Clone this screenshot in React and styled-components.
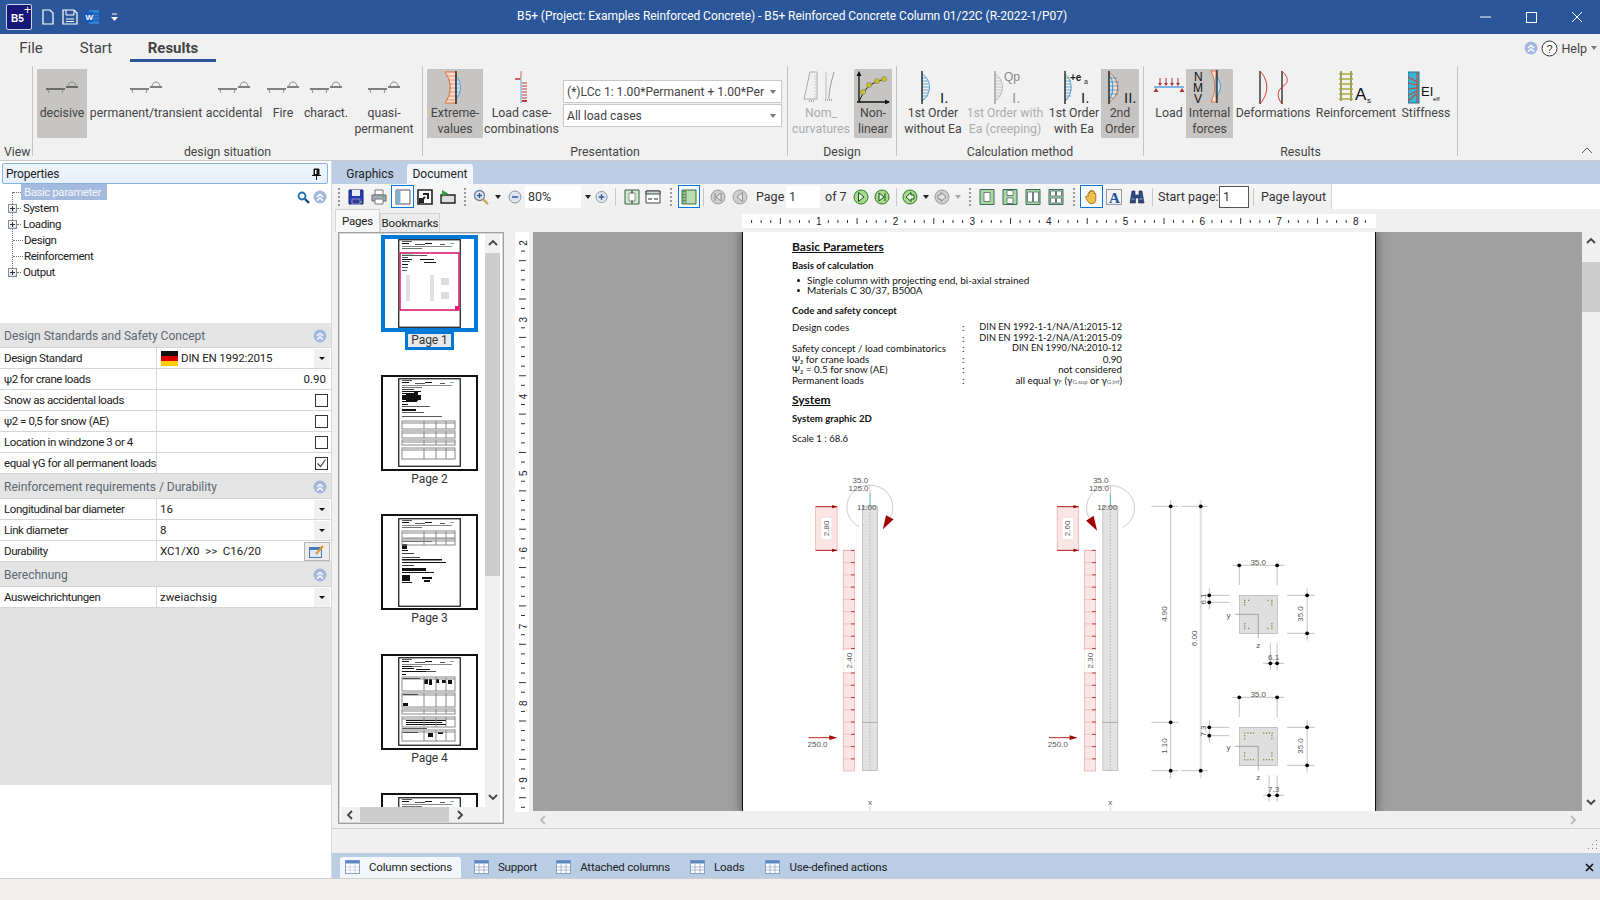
import React from "react";
import styled, { createGlobalStyle } from "styled-components";

const GlobalStyle = createGlobalStyle`
  html, body { margin: 0; padding: 0; height: 100%; overflow: hidden; }
  body { font-family: Roboto, "Liberation Sans", sans-serif; color: #333; background: #f1f1f1; }
  * { box-sizing: border-box; }
`;

const Root = styled.div`
  width: 1600px;
  height: 900px;
  display: flex;
  flex-direction: column;
  overflow: hidden;
`;

/* ---------- title bar ---------- */
const TitleBar = styled.div`
  height: 34px;
  flex: none;
  background: #2b579a;
  display: flex;
  align-items: center;
  color: #fff;
`;
const QuickAccess = styled.div`
  width: 517px;
  flex: none;
  display: flex;
  align-items: center;
  padding-left: 6px;
`;
const Logo = styled.div`
  width: 26px;
  height: 26px;
  background: #17177a;
  border: 1px solid #cfd6e6;
  border-radius: 2px;
  font: 700 10px "Liberation Sans", sans-serif;
  color: #fff;
  display: flex;
  align-items: center;
  padding: 3px 0 0 4px;
  position: relative;
  margin-right: 6px;
  span { position: absolute; top: -2px; right: 0; font-size: 12px; font-weight: 400; }
`;
const QuickBtn = styled.div`
  width: ${(p) => p.$w}px;
  display: flex;
  justify-content: center;
`;
const Title = styled.div`
  font-size: 12px;
  white-space: nowrap;
  letter-spacing: -0.04px;
  margin-top: -2px;
`;
const WindowButtons = styled.div`
  margin-left: auto;
  display: flex;
  padding-right: 0;
`;
const WindowBtn = styled.div`
  width: 46px;
  height: 34px;
  display: flex;
  align-items: center;
  justify-content: center;
`;

/* ---------- menu tabs ---------- */
const MenuRow = styled.div`
  height: 28px;
  flex: none;
  display: flex;
  align-items: flex-end;
  background: #f1f1f1;
`;
const MenuTab = styled.div`
  height: 28px;
  width: ${(p) => p.$w}px;
  display: flex;
  align-items: center;
  justify-content: center;
  font-size: 15px;
  color: #444;
  font-weight: ${(p) => (p.$active ? 700 : 400)};
  border-bottom: 3px solid ${(p) => (p.$active ? "#2b579a" : "transparent")};
  padding-top: 2px;
`;
const HelpArea = styled.div`
  margin-left: auto;
  height: 28px;
  display: flex;
  align-items: center;
  gap: 3px;
  padding-right: 3px;
  font-size: 12.5px;
  color: #444;
`;

/* ---------- ribbon ---------- */
const Ribbon = styled.div`
  height: 98px;
  flex: none;
  background: #f1f1f1;
  display: flex;
  padding: 4px 0;
  position: relative;
`;
const Group = styled.div`
  width: ${(p) => p.$w}px;
  flex: none;
  display: flex;
  flex-direction: column;
  border-right: 1px solid #c4c4c4;
`;
const GroupBody = styled.div`
  flex: 1;
  display: flex;
  gap: ${(p) => p.$gap ?? 3}px;
  padding: 3px 0 0 ${(p) => p.$pl || 0}px;
`;
const GroupLabel = styled.div`
  height: 18px;
  line-height: 18px;
  margin-bottom: -5px;
  font-size: 12.3px;
  color: #444;
  text-align: ${(p) => (p.$left ? "left" : "center")};
  padding-left: ${(p) => (p.$left ? 4 : 0)}px;
`;
const RibbonBtn = styled.div`
  width: ${(p) => p.$w}px;
  flex: none;
  height: 69px;
  margin-left: ${(p) => p.$ml || 0}px;
  background: ${(p) => (p.$active ? "#c6c5c3" : "transparent")};
  color: ${(p) => (p.$off ? "#adadad" : "#444")};
  display: flex;
  flex-direction: column;
  align-items: center;
`;
const BtnIcon = styled.div`
  height: 36px;
  flex: none;
  display: flex;
  align-items: center;
  justify-content: center;
`;
const BtnText = styled.div`
  font-size: 12.3px;
  line-height: 16px;
  text-align: center;
  white-space: nowrap;
`;
const ComboStack = styled.div`
  display: flex;
  flex-direction: column;
  gap: 1px;
  margin: 11px 0 0 3px;
`;
const Combo = styled.div`
  width: 219px;
  height: 23px;
  background: #fff;
  border: 1px solid #c8c8c8;
  font-size: 12.1px;
  color: #444;
  display: flex;
  align-items: center;
  padding-left: 3px;
  white-space: nowrap;
  span { flex: 1; }
`;
const SmallArrow = styled.i`
  flex: none;
  display: block;
  width: 0;
  height: 0;
  margin: 0 5px 0 6px;
  border-left: 3px solid transparent;
  border-right: 3px solid transparent;
  border-top: 4px solid ${(p) => p.$c || "#777"};
`;
const RibbonCollapse = styled.div`
  position: absolute;
  right: 7px;
  bottom: 2px;
`;

/* ---------- workspace ---------- */
const Workspace = styled.div`
  flex: 1;
  min-height: 0;
  display: flex;
  border-top: 1px solid #c8c8c8;
  border-bottom: 1px solid #cfcfcf;
`;
const LeftPanel = styled.div`
  width: 332px;
  flex: none;
  background: #fff;
  display: flex;
  flex-direction: column;
  border-right: 1px solid #d8d8d8;
`;
const PanelHeader = styled.div`
  height: 21px;
  margin: 2px 3px 0 2px;
  flex: none;
  background: linear-gradient(#eef5fd, #e6f0fb);
  border: 1px solid #86b2e0;
  border-radius: 2px;
  display: flex;
  align-items: center;
  justify-content: space-between;
  padding: 0 6px 0 3px;
  font-size: 12px;
  letter-spacing: -0.2px;
  color: #222;
`;
const Tree = styled.div`
  height: 139px;
  flex: none;
  position: relative;
`;
const TreeLine = styled.div`
  position: absolute;
  left: 12px;
  top: 8px;
  height: 80px;
  border-left: 1px dotted #777;
`;
const TreeTools = styled.div`
  position: absolute;
  right: 4px;
  top: 6px;
  display: flex;
  gap: 3px;
  align-items: center;
`;
const TreeRow = styled.div`
  height: 16px;
  display: flex;
  align-items: center;
  padding-left: 8px;
  font-size: 11.5px;
  letter-spacing: -0.45px;
  color: #222;
  position: relative;
`;
const Expander = styled.div`
  width: 9px;
  height: 9px;
  border: 1px solid #8a8a96;
  background: linear-gradient(#fff, #d8dce6);
  position: relative;
  flex: none;
  &::before { content: ""; position: absolute; left: 1px; right: 1px; top: 3px; height: 1px; background: #334; }
  &::after { content: ""; position: absolute; top: 1px; bottom: 1px; left: 3px; width: 1px; background: #334; }
`;
const TreeDash = styled.div`
  width: ${(p) => p.$w}px;
  margin-left: ${(p) => p.$ml || 0}px;
  margin-right: ${(p) => p.$mr ?? 2}px;
  border-top: 1px dotted #777;
  flex: none;
`;
const TreeText = styled.span`
  background: ${(p) => (p.$sel ? "#a4b9de" : "transparent")};
  color: ${(p) => (p.$sel ? "#f3f6fb" : "#222")};
  padding: 0 ${(p) => (p.$sel ? 6 : 0)}px 0 ${(p) => (p.$sel ? 3 : 0)}px;
  margin-left: ${(p) => (p.$sel ? -3 : 0)}px;
  line-height: 16px;
`;
const SectionHead = styled.div`
  height: ${(p) => p.$h || 25}px;
  flex: none;
  background: #e4e4e4;
  display: flex;
  align-items: center;
  justify-content: space-between;
  padding: 2px 4px 0 4px;
  font-size: 12px;
  color: #5f6672;
  border-bottom: 1px solid #d6d6d6;
`;
const PropRow = styled.div`
  height: 21px;
  flex: none;
  display: grid;
  grid-template-columns: 157px 1fr;
  border-bottom: 1px solid #d6d6d6;
  font-size: 11.5px;
  color: #222;
`;
const PropLabel = styled.div`
  border-right: 1px solid #d6d6d6;
  padding-left: 4px;
  display: flex;
  align-items: center;
  white-space: nowrap;
  letter-spacing: -0.42px;
`;
const PropValue = styled.div`
  display: flex;
  align-items: center;
  padding-left: ${(p) => (p.$flag ? 4 : 3)}px;
  justify-content: ${(p) => (p.$end ? "flex-end" : "flex-start")};
  padding-right: ${(p) => (p.$end ? 5 : 1)}px;
  letter-spacing: ${(p) => (p.$flag ? "-0.15px" : 0)};
  span { flex: 1; }
`;
const DropBtn = styled.div`
  width: 16px;
  height: 19px;
  background: #f0f0f0;
  display: flex;
  align-items: center;
  justify-content: center;
  flex: none;
  i { display: block; width: 0; height: 0; border-left: 3px solid transparent; border-right: 3px solid transparent; border-top: 3px solid #111; }
`;
const EditBtn = styled.div`
  width: 26px;
  height: 19px;
  background: #ececec;
  border: 1px solid #b5b5b5;
  display: flex;
  align-items: center;
  justify-content: center;
  flex: none;
`;
const CheckBox = styled.div`
  width: 13px;
  height: 13px;
  border: 1px solid #333;
  background: #fff;
  margin-right: -2px;
  display: flex;
  align-items: center;
  justify-content: center;
`;
const PanelFill = styled.div`
  height: 177px;
  flex: none;
  background: #e2e2e2;
`;

const RightPane = styled.div`
  flex: 1;
  min-width: 0;
  display: flex;
  flex-direction: column;
  background: #f0f0f0;
`;
const DocTabs = styled.div`
  height: 23px;
  flex: none;
  background: #bccee5;
  display: flex;
  align-items: flex-end;
  padding-left: 3px;
  font-size: 12px;
`;
const DocTab = styled.div`
  height: 20px;
  width: ${(p) => p.$w}px;
  margin-left: ${(p) => p.$ml || 0}px;
  display: flex;
  align-items: center;
  justify-content: center;
  color: #222;
  border-radius: 3px 3px 0 0;
  background: ${(p) => (p.$active ? "#f3f7fc" : "transparent")};
`;
const Toolbar = styled.div`
  height: 25px;
  flex: none;
  background: #fff;
  display: flex;
  align-items: center;
  font-size: 12.5px;
  color: #333;
`;
const ToolStrip = styled.div`
  height: 25px;
  width: 1000px;
  flex: none;
  background: linear-gradient(#f6f6f6, #efefef);
  display: flex;
  align-items: center;
  border-right: 1px solid #d4d4d4;
`;
const Tool = styled.div`
  width: ${(p) => p.$w}px;
  height: 23px;
  flex: none;
  display: flex;
  align-items: center;
  justify-content: center;
  border: 1px solid ${(p) => (p.$active ? "#0078d7" : "transparent")};
  background: ${(p) => (p.$active ? "#fbfbfb" : "transparent")};
`;
const ToolSep = styled.div`
  width: ${(p) => p.$w}px;
  height: 23px;
  flex: none;
  display: flex;
  align-items: center;
  justify-content: center;
  &::before { content: ""; height: 18px; width: 0; border-left: ${(p) => (p.$grip ? "2px dotted #999" : "1px solid #c8c8c8")}; }
`;
const ToolText = styled.div`
  width: ${(p) => p.$w}px;
  flex: none;
  padding-left: ${(p) => p.$pl || 0}px;
  white-space: nowrap;
`;
const ToolField = styled.div`
  width: ${(p) => p.$w}px;
  height: 22px;
  flex: none;
  background: ${(p) => (p.$bg ? "#fff" : "transparent")};
  padding-left: 3px;
  display: flex;
  align-items: center;
  border: ${(p) => (p.$boxed ? "1px solid #555" : "none")};
`;

/* ---------- viewer ---------- */
const ViewerRow = styled.div`
  flex: 1;
  min-height: 0;
  display: flex;
  border-bottom: 1px solid #d2d2d2;
`;
const ThumbColumn = styled.div`
  width: 183px;
  flex: none;
  padding-left: 3px;
  display: flex;
  flex-direction: column;
`;
const ThumbTabs = styled.div`
  height: 23px;
  flex: none;
  display: flex;
  align-items: flex-end;
  font-size: 11.5px;
`;
const ThumbTab = styled.div`
  height: ${(p) => (p.$active ? 23 : 19)}px;
  width: ${(p) => p.$w}px;
  display: flex;
  align-items: center;
  justify-content: center;
  background: ${(p) => (p.$active ? "#f8f8f8" : "#ececec")};
  border: 1px solid #d4d4d4;
  border-bottom: none;
  color: #222;
  letter-spacing: -0.15px;
`;
const ThumbFrame = styled.div`
  width: 166px;
  height: 592px;
  margin-left: 3px;
  flex: none;
  background: #fff;
  border: 1px solid #a0a0a0;
  outline: 1px solid #d8d8d8;
  outline-offset: -2px;
  display: grid;
  grid-template-columns: 1fr 15px;
  grid-template-rows: 1fr 15px;
  padding: 0 3px 1px 2px;
`;
const ThumbList = styled.div`
  overflow: hidden;
  display: flex;
  flex-direction: column;
  align-items: flex-start;
  padding: 2px 0 0 40px;
`;
const ThumbItem = styled.div`
  height: 139.5px;
  width: 97px;
  flex: none;
  display: flex;
  flex-direction: column;
  align-items: center;
`;
const ThumbBox = styled.div`
  width: 97px;
  height: ${(p) => (p.$sel ? 97 : 96)}px;
  flex: none;
  display: flex;
  align-items: center;
  justify-content: center;
  border: ${(p) => (p.$sel ? "4px solid #0078d7" : "2px solid #111")};
`;
const ThumbName = styled.div`
  font-size: 12px;
  color: #333;
  line-height: 13px;
  letter-spacing: -0.1px;
  padding: ${(p) => (p.$sel ? "0 3px" : "2px 4px")};
  margin-top: ${(p) => (p.$sel ? -1 : 0)}px;
  border: ${(p) => (p.$sel ? "3px solid #0078d7" : "none")};
  background: ${(p) => (p.$sel ? "#e8e8e8" : "transparent")};
`;
const VScroll = styled.div`
  background: #f0f0f0;
  display: flex;
  flex-direction: column;
  align-items: center;
`;
const MainVScroll = styled(VScroll)`
  width: 18px;
  flex: none;
`;
const ScrollArrow = styled.div`
  height: ${(p) => p.$h || 18}px;
  flex: none;
  display: flex;
  align-items: center;
  justify-content: center;
`;
const ScrollThumb = styled.div`
  width: 100%;
  height: ${(p) => p.$h}px;
  flex: none;
  margin-top: ${(p) => p.$mt || 0}px;
  margin-bottom: auto;
  background: #cdcdcd;
`;
const HScroll = styled.div`
  grid-column: 1 / 3;
  background: #f0f0f0;
  display: flex;
  align-items: center;
  padding-left: 4px;
`;
const HThumb = styled.div`
  width: 89px;
  height: 15px;
  margin: 0 6px 0 5px;
  background: #cdcdcd;
`;
const DocArea = styled.div`
  flex: 1;
  min-width: 0;
  display: grid;
  grid-template-rows: 23px 1fr 17px;
`;
const TopRuler = styled.div`
  padding: 5px 0 0 227px;
  svg { display: block; }
`;
const DocMiddle = styled.div`
  display: flex;
  min-height: 0;
`;
const SideRuler = styled.div`
  width: 18px;
  flex: none;
  svg { display: block; }
`;
const Canvas = styled.div`
  flex: 1;
  min-width: 0;
  background: #a0a0a0;
  overflow: hidden;
  padding-left: 209px;
`;
const Page = styled.div`
  width: 634px;
  height: 100%;
  background: #fff;
  border-left: 1px solid #111;
  border-right: 1px solid #111;
  box-shadow: 0 0 9px 2px #666;
  padding: 8px 0 0 49px;
  font-family: Lato, "Open Sans", sans-serif;
  font-size: 9.8px;
  color: #111;
  overflow: hidden;
`;
const DocH1 = styled.div`
  font-size: 12px;
  font-weight: 700;
  line-height: 14px;
  margin-top: ${(p) => p.$mt || 0}px;
  span { text-decoration: underline; }
`;
const DocH2 = styled.div`
  font-size: 9.6px;
  font-weight: ${(p) => (p.$plain ? 400 : 700)};
  line-height: 12px;
  margin-top: ${(p) => p.$mt || 0}px;
`;
const DocBullets = styled.ul`
  margin: 3px 0 0 0;
  padding: 0 0 0 15px;
  list-style: none;
  font-size: 10px;
  li { line-height: 10px; position: relative; }
  li::before { content: ""; position: absolute; left: -10px; top: 4px; width: 3px; height: 3px; border-radius: 50%; background: #111; }
`;
const DocTable = styled.div`
  margin-top: 5px;
`;
const DocRow = styled.div`
  display: grid;
  grid-template-columns: 170px 12px 148px;
  line-height: 10.5px;
  height: 10.5px;
  white-space: nowrap;
`;
const DocVal = styled.div`
  text-align: right;
  font-size: ${(p) => (p.$code ? 9.2 : 9.8)}px;
  sub { font-size: 6px; vertical-align: baseline; color: #666; }
`;
const Drawing = styled.svg`
  display: block;
  margin: 5px 0 0 -12px;
  font-family: "Liberation Sans", sans-serif;
`;
const MainHScroll = styled.div`
  margin-left: 18px;
  display: flex;
  align-items: center;
  justify-content: space-between;
  padding: 0 22px 0 5px;
`;
const BelowViewer = styled.div`
  height: 24px;
  flex: none;
  display: flex;
  justify-content: flex-end;
  align-items: flex-end;
  padding: 0 2px 3px 0;
`;
const SheetBar = styled.div`
  height: 25px;
  flex: none;
  background: #b9cde5;
  display: flex;
  align-items: flex-end;
  padding-left: 8px;
  font-size: 11.5px;
  color: #222;
`;
const SheetTab = styled.div`
  height: 21px;
  display: flex;
  align-items: center;
  gap: 9px;
  white-space: nowrap;
  flex: none;
  padding: 0 ${(p) => (p.$active ? 9 : 0)}px 1px ${(p) => (p.$active ? 5 : 0)}px;
  margin-left: ${(p) => p.$ml || 0}px;
  background: ${(p) => (p.$active ? "#f3f7fc" : "transparent")};
  border-radius: 3px 3px 0 0;
  letter-spacing: -0.2px;
`;
const SheetClose = styled.div`
  margin-left: auto;
  height: 21px;
  width: 18px;
  display: flex;
  align-items: center;
  justify-content: center;
  padding-right: 4px;
`;
const StatusBar = styled.div`
  height: 21px;
  flex: none;
  background: #f1f0ef;
`;

/* ---------- icons ---------- */
const Chevrons = ({ size = 14 }) => (
  <svg width={size} height={size} viewBox="0 0 14 14">
    <circle cx="7" cy="7" r="6.5" fill="#a6b7de" />
    <path d="M4 7l3-2.6L10 7M4 10.5l3-2.6 3 2.6" fill="none" stroke="#fff" strokeWidth="1.4" />
  </svg>
);

const Situation = () => (
  <svg width="32" height="12" viewBox="0 0 32 12">
    <path d="M0 8h19" stroke="#111" />
    <path d="M2 8.500a7.500 7 0 0 0 15 0" fill="none" stroke="#888" />
    <path d="M20 6h12" stroke="#111" />
    <path d="M22 5.500a4 4.500 0 0 1 8 0" fill="none" stroke="#888" />
  </svg>
);

const Extreme = () => (
  <svg width="22" height="33" viewBox="0 0 22 33">
    <path d="M1 1h11v31H1C8 22 8 11 1 1z" fill="#f7ddcf" stroke="#d9703c" />
    <path d="M2 5h10M4 9h8M5 13h7M5 17h7M5 21h7M4 25h8M2 29h10" stroke="#d9703c" strokeWidth=".7" />
    <path d="M12 5C18 11 18 22 12 28z" fill="#cfe4f2" stroke="#5e9cc6" />
    <path d="M12 9h3M12 13h4M12 17h4M12 21h4M12 25h2" stroke="#5e9cc6" strokeWidth=".7" />
    <path d="M12 0v33" stroke="#111" strokeWidth="1.2" />
  </svg>
);
const LoadCase = () => (
  <svg width="18" height="33" viewBox="0 0 18 33">
    <path d="M8 0v7" stroke="#c96a5a" />
    <path d="M2 8h6" stroke="#b33" strokeWidth="1.5" />
    <path d="M8 8v24" stroke="#8dbde6" strokeWidth="1.5" />
    <path d="M9 12h5M9 15h5M9 18h5M9 21h5M9 24h5M9 27h5M9 30h5" stroke="#c0392b" />
    <path d="M9 30h5" stroke="#c0392b" strokeWidth="2" />
  </svg>
);
const NomCurv = () => (
  <svg width="36" height="32" viewBox="0 0 36 32">
    <path d="M7 1h7v27H1z" fill="none" stroke="#aaa" />
    <path d="M12 4v24" stroke="#ccc" strokeDasharray="2 1" />
    <path d="M31 1c-2 8-5 16-5 27" fill="none" stroke="#999" />
    <path d="M23 1v27" stroke="#bbb" />
    <path d="M22 29h8M6 30h5" stroke="#aaa" strokeWidth="2" strokeDasharray="1 1" />
  </svg>
);
const NonLinear = () => (
  <svg width="34" height="33" viewBox="0 0 34 33">
    <path d="M3 31V2M1 31h32" stroke="#111" strokeWidth="1.3" />
    <path d="M3 0l-2.500 5h5zM34 31l-5-2.500v5z" fill="#111" />
    <path d="M3 31C8 18 14 11 30 8" fill="none" stroke="#111" />
    <g fill="#c8c21e" stroke="#777" strokeWidth=".5">
      <circle cx="7" cy="21" r="2.600" /><circle cx="13" cy="14" r="2.600" />
      <circle cx="21" cy="10" r="2.600" /><circle cx="28" cy="8" r="2.600" />
    </g>
  </svg>
);
const Bulge = ({ c = "#4d9bd0", line = "#111", w = 9, dx = 0 }) => (
  <g transform={`translate(${dx} 0)`}>
    <path d={`M3 4C${w + 4} 10 ${w + 4} 24 3 31`} fill="none" stroke={c} />
    <path d="M3 8h4M3 11h6M3 14h6M3 17h7M3 20h7M3 23h6M3 26h6M3 29h3" stroke={c} strokeWidth=".8" />
    <path d="M3 1v33" stroke={line} strokeWidth="1.3" />
  </g>
);
const RomanText = styled.text`
  font-family: "Liberation Sans", sans-serif;
  font-size: ${(p) => p.$s || 15}px;
`;
const Order1 = () => (
  <svg width="32" height="35" viewBox="0 0 32 35">
    <Bulge dx={2} />
    <RomanText x="23" y="33" fill="#222">I.</RomanText>
  </svg>
);
const OrderCreep = () => (
  <svg width="34" height="35" viewBox="0 0 34 35">
    <Bulge c="#b8b8b8" line="#999" dx={4} />
    <RomanText x="16" y="11" fill="#888" $s={12}>Qp</RomanText>
    <RomanText x="24" y="33" fill="#999">I.</RomanText>
  </svg>
);
const OrderEa = () => (
  <svg width="38" height="35" viewBox="0 0 38 35">
    <Bulge w={7} dx={7} />
    <RomanText x="15" y="11" fill="#222" $s={10} fontWeight="700">+e</RomanText>
    <RomanText x="29" y="14" fill="#222" $s={7}>a</RomanText>
    <RomanText x="26" y="33" fill="#222">I.</RomanText>
  </svg>
);
const Order2 = () => (
  <svg width="32" height="35" viewBox="0 0 32 35">
    <g transform="translate(2 0)">
      <path d="M3 2c10 8 13 22 0 30" fill="#f3e2d6" stroke="#cf6a33" />
      <path d="M3 4C8 10 8 24 3 30" fill="#cfe3f0" stroke="#3f8ec6" />
      <path d="M3 8h8M3 12h10M3 16h10M3 20h10M3 24h9M3 28h5" stroke="#3f8ec6" strokeWidth=".8" />
      <path d="M3 1v33" stroke="#111" strokeWidth="1.3" />
    </g>
    <RomanText x="20" y="33" fill="#222">II.</RomanText>
  </svg>
);
const LoadIcon = () => (
  <svg width="32" height="36" viewBox="0 0 32 36">
    <path d="M1 18h30" stroke="#7fb3e5" strokeWidth="2" />
    <path d="M7 9v6M13 9v6M19 9v6M25 9v6" stroke="#a33" />
    <path d="M5 14h4l-2 3zM11 14h4l-2 3zM17 14h4l-2 3zM23 14h4l-2 3z" fill="#a33" />
    <path d="M3 19l-2.500 4h5zM29 19l-2.500 4h5z" fill="#a33" />
  </svg>
);
const ForcesIcon = () => (
  <svg width="36" height="35" viewBox="0 0 36 35">
    <RomanText x="2" y="11" fill="#111" $s={12}>N</RomanText>
    <RomanText x="1" y="22" fill="#111" $s={12}>M</RomanText>
    <RomanText x="2" y="33" fill="#111" $s={12}>V</RomanText>
    <path d="M19 1h5v31h-5c5-10 5-21 0-31z" fill="#f8e2d6" stroke="#d9703c" />
    <path d="M24 6c6 7 6 14 0 21z" fill="#cfe4f2" stroke="#4d9bd0" />
    <path d="M25 0v33" stroke="#111" strokeWidth="1.2" />
  </svg>
);
const DeformIcon = () => (
  <svg width="30" height="33" viewBox="0 0 30 33">
    <path d="M2 0v33M24 0v33" stroke="#111" strokeWidth="1.2" />
    <path d="M2 0c9 10 9 22 0 33" fill="none" stroke="#d33" />
    <path d="M24 0c8 8 6 12 0 16-6 5-4 12 0 17" fill="none" stroke="#d33" />
  </svg>
);
const ReinfIcon = () => (
  <svg width="38" height="35" viewBox="0 0 38 35">
    <path d="M4 1v30M14 1v30" stroke="#7d7d20" strokeWidth="1.4" />
    <path d="M2 4h14M2 9h14M2 14h14M2 19h14M2 24h14M2 29h14" stroke="#a8a846" strokeWidth="1.6" />
    <RomanText x="18" y="30" fill="#111" $s={17}>A</RomanText>
    <RomanText x="30" y="33" fill="#111" $s={8}>s</RomanText>
  </svg>
);
const StiffIcon = () => (
  <svg width="36" height="33" viewBox="0 0 36 33">
    <rect x="0" y="1" width="11" height="31" fill="#38b6d8" stroke="#2a6f86" />
    <path d="M0 6l9 5M0 12l10 2M0 18l10-1M0 24l9-4M0 30l8-7M9 1v31" stroke="#c8452e" strokeWidth="1.1" />
    <RomanText x="13" y="25" fill="#111" $s={13}>EI</RomanText>
    <RomanText x="25" y="30" fill="#111" $s={6}>eff</RomanText>
  </svg>
);

/* toolbar icons */
const Ico = ({ children, s = 16, w }) => (
  <svg width={w || s} height={s} viewBox={`0 0 ${w || s} ${s}`}>{children}</svg>
);
const SaveIco = () => (
  <Ico>
    <path d="M1 1h14v14H1z" fill="#2a3bb0" stroke="#1b2470" />
    <path d="M4 1h8v6H4z" fill="#e8edf6" />
    <path d="M4 10h8v5H4z" fill="#30389a" stroke="#c6cbe8" strokeWidth=".6" />
    <circle cx="13" cy="13" r="1" fill="#4ec24e" />
  </Ico>
);
const PrintIco = () => (
  <Ico>
    <path d="M4 1h8v5H4z" fill="#fff" stroke="#777" />
    <path d="M1 6h14v6H1z" fill="#a7adb8" stroke="#666" />
    <path d="M4 10h8v5H4z" fill="#fff" stroke="#777" />
    <circle cx="12.500" cy="8" r="1" fill="#3db23d" />
  </Ico>
);
const PanelIco = () => (
  <Ico>
    <path d="M1 1h14v14H1z" fill="#fff" stroke="#555" />
    <path d="M1.500 1.500h4v13h-4z" fill="#7fb0d5" />
  </Ico>
);
const ExportIco = () => (
  <Ico>
    <path d="M1 1h14v14H1z" fill="#fff" stroke="#222" strokeWidth="1.600" />
    <path d="M2 14L8 8M6 5h5v5" fill="none" stroke="#222" strokeWidth="2" />
    <path d="M2 9h5v5H2z" fill="#222" />
  </Ico>
);
const FilmIco = () => (
  <Ico>
    <path d="M1 6h14v8H1z" fill="#ddd" stroke="#222" strokeWidth="1.400" />
    <path d="M2 1v7l6-3.500z" fill="#2d9b3a" />
  </Ico>
);
const ZoomIco = () => (
  <Ico>
    <circle cx="6.500" cy="6.500" r="5" fill="#dbe6f4" stroke="#6f7f96" strokeWidth="1.300" />
    <path d="M10 10l5 5" stroke="#c8a24a" strokeWidth="2.200" />
    <path d="M4 6.500h5M6.500 4v5" stroke="#2d5b9a" strokeWidth="1.300" />
  </Ico>
);
const RoundIco = ({ sign }) => (
  <Ico s={14}>
    <circle cx="7" cy="7" r="6" fill="#dfe5ee" stroke="#8793a6" />
    <path d={sign === "+" ? "M4 7h6M7 4v6" : "M4 7h6"} stroke="#2d5b9a" strokeWidth="1.500" />
  </Ico>
);
const FitPage = () => (
  <Ico>
    <path d="M1 1h14v14H1z" fill="#cfe8cf" stroke="#39613f" />
    <path d="M5 4h6v8H5z" fill="#fff" stroke="#555" strokeWidth=".6" />
    <path d="M8 1.500v3M8 11.500v3" stroke="#222" />
  </Ico>
);
const FitWidth = () => (
  <Ico>
    <path d="M1 2h14v12H1z" fill="#fff" stroke="#445" />
    <path d="M1 2h14v3H1z" fill="#c8d8c8" stroke="#445" />
    <path d="M3 10h4M9 10h4" stroke="#222" />
  </Ico>
);
const ViewPanel = () => (
  <Ico>
    <path d="M1 1h14v14H1z" fill="#b9dcb0" stroke="#3c6a3c" />
    <path d="M1.500 1.500h4v13h-4z" fill="#5b8a5b" />
    <path d="M2.500 4h2M2.500 7h2M2.500 10h2M2.500 13h2" stroke="#fff" />
  </Ico>
);
const NavIco = ({ kind, on }) => {
  const fill = on ? "#a9d88f" : "#cfcfcf";
  const stroke = on ? "#2f7a2f" : "#9b9b9b";
  const d = {
    first: "M11 4L6 8l5 4zM5 4v8",
    prev: "M10.500 3.500L5 8l5.500 4.500z",
    next: "M5.500 3.500L11 8l-5.500 4.500z",
    last: "M5 4l5 4-5 4zM11 4v8",
    back: "M9 3.500L4 8l5 4.500V10h3V6H9z",
    fwd: "M7 3.500L12 8l-5 4.500V10H4V6h3z",
  }[kind];
  return (
    <Ico>
      <circle cx="8" cy="8" r="7" fill={fill} stroke={stroke} />
      <path d={d} fill={on ? "#e9f6df" : "#e8e8e8"} stroke={on ? "#14501a" : "#8a8a8a"} />
    </Ico>
  );
};
const BookIco = ({ kind }) => {
  const cells = {
    single: <path d="M5 3.500h6v9H5z" fill="#fff" stroke="#456" strokeWidth=".7" />,
    cont: <path d="M5 1.500h6v5H5zM5 9h6v5.500H5z" fill="#fff" stroke="#456" strokeWidth=".7" />,
    two: <path d="M2.500 3h5v10h-5zM8.500 3h5v10h-5z" fill="#fff" stroke="#456" strokeWidth=".7" />,
    four: <path d="M2.500 2h5v5h-5zM8.500 2h5v5h-5zM2.500 9h5v5h-5zM8.500 9h5v5h-5z" fill="#fff" stroke="#456" strokeWidth=".7" />,
  }[kind];
  return (
    <Ico>
      <path d="M1 .500h14v15H1z" fill="#a9d8a0" stroke="#3c6a5a" />
      {cells}
    </Ico>
  );
};
const HandIco = () => (
  <Ico>
    <path d="M4 8V4.500c0-1.200 1.500-1.200 1.500 0V2.500c0-1.200 1.700-1.200 1.700 0v-.5c0-1 1.600-1 1.600 0v1c0-1 1.500-1 1.500 0v2c0-1 1.500-1 1.500 0v6c0 2-1.500 3.500-3.500 3.500H7c-1.500 0-2.500-1-3-2L1.500 8.500C1 7.500 2.500 6.500 3.500 7.500z" fill="#f0c04c" stroke="#8a6415" strokeWidth=".8" />
  </Ico>
);
const TextSelIco = () => (
  <Ico>
    <path d="M.500.500h15v15H.500z" fill="none" stroke="#345" strokeDasharray="1 1" />
    <RomanText x="3" y="14" fill="#1f4e9a" $s={15} fontWeight="700" style={{ fontFamily: "Liberation Serif" }}>A</RomanText>
  </Ico>
);
const BinocIco = () => (
  <Ico>
    <path d="M3 2h3v4h4V2h3l2 12H9.500V9h-3v5H1z" fill="#2e4a80" stroke="#19294d" strokeWidth=".6" />
    <path d="M2.500 10h3M10.500 10h3" stroke="#8fb0e0" />
  </Ico>
);
const TinyArrow = ({ dir, c = "#444" }) => {
  const d = { up: "M1 7l4-4 4 4", down: "M1 3l4 4 4-4", left: "M7 1L3 5l4 4", right: "M3 1l4 4-4 4" }[dir];
  return (
    <svg width="10" height="10" viewBox="0 0 10 10">
      <path d={d} fill="none" stroke={c} strokeWidth="1.800" />
    </svg>
  );
};
const GridIco = ({ active }) => (
  <svg width="15" height="14" viewBox="0 0 15 14">
    <rect x=".5" y=".5" width="14" height="13" fill="#fff" stroke="#8aa0c4" />
    <rect x=".5" y=".5" width="14" height="3" fill="#5e86c4" />
    <path d="M1 7h13M1 10h13M5 4v9M10 4v9" stroke={active ? "#c3cfe2" : "#9aa8c4"} strokeWidth=".8" />
  </svg>
);

/* rulers */
const HRuler = () => {
  const parts = [];
  for (let i = 1; i < 66; i++) {
    const x = i * 9.59;
    const major = i % 8 === 0;
    const half = i % 8 === 4;
    if (major) {
      parts.push(
        <text key={i} x={x} y="10.500" fontSize="10" textAnchor="middle" fill="#222" fontFamily="Liberation Sans">
          {i / 8}
        </text>
      );
    } else {
      parts.push(<path key={i} d={`M${x} ${half ? 4 : 6}v${half ? 6 : 3}`} stroke="#333" />);
    }
  }
  return (
    <svg width="634" height="14" viewBox="0 0 634 14" style={{ background: "#fff" }}>
      {parts}
    </svg>
  );
};
const VRuler = () => {
  const parts = [];
  for (let i = 0; i < 62; i++) {
    const y = 4.500 + i * 9.59;
    parts.push(<path key={`t${i}`} d={`M${i % 4 === 2 ? 4 : 6} ${y + 5}h${i % 4 === 2 ? 7 : 4}`} stroke="#333" />);
  }
  [2, 3, 4, 5, 6, 7, 8, 9, 10].forEach((v) => {
    const y = 11 + (v - 2) * 76.7;
    parts.push(
      <rect key={`b${v}`} x="2" y={y - 6} width="12" height="12" fill="#fff" />,
      <text key={`l${v}`} fontSize="10" textAnchor="middle" fill="#222" fontFamily="Liberation Sans" transform={`translate(11.500 ${y}) rotate(-90)`}>
        {v}
      </text>
    );
  });
  return (
    <svg width="14" height="580" viewBox="0 0 14 580" style={{ background: "#fff" }}>
      {parts}
    </svg>
  );
};

/* thumbnails: fake page content */
const commonBars = [
  [4, 2, 10, 0.7], [4, 4, 7, 1], [17, 5, 10, 0.7], [27, 4, 7, 1], [42, 5, 5, 0.7], [52, 4, 4, 0.7, "#4a80c8"], [4, 7, 50, 0.5], [4, 9, 20, 0.6],
];
const thumbBars = {
  1: [
    [4, 16, 25, 0.7], [4, 18, 6, 0.7], [4, 20, 10, 1], [22, 20, 14, 1], [4, 22, 8, 0.7], [26, 23, 12, 1], [4, 25, 6, 1], [4, 28, 6, 0.7], [4, 31, 5, 0.7],
  ],
  2: [
    [4, 11, 12, 0.8], [4, 13, 19, 1], [4, 15, 8, 1], [4, 17, 19, 5], [4, 23, 15, 1], [8, 15, 10, 9], [16, 14, 4, 9], [4, 26, 6, 1], [4, 28, 28, 0.7], [4, 31, 14, 2], [4, 34, 22, 0.7], [4, 38, 40, 0.7],
  ],
  3: [
    [4, 23, 30, 0.7], [4, 26, 5, 5], [4, 32, 6, 1], [4, 35, 12, 0.8], [4, 39, 18, 0.8], [4, 41, 40, 1.5], [4, 44, 44, 1], [4, 47, 12, 0.8], [4, 50, 24, 3], [4, 54, 32, 1], [4, 57, 8, 6], [24, 59, 10, 2], [26, 62, 6, 2], [4, 64, 10, 1],
  ],
  4: [
    [4, 9, 10, 1], [4, 11, 12, 1], [18, 12, 14, 1], [4, 14, 24, 1], [26, 14, 12, 0.7], [4, 17, 4, 1], [5, 21, 17, 1], [26, 22, 4, 5], [31, 22, 3, 6], [38, 22, 3, 4], [44, 23, 4, 3], [50, 23, 4, 4], [5, 37, 15, 1], [5, 46, 5, 3], [8, 63, 40, 1], [8, 65, 36, 1], [8, 67, 40, 1], [4, 71, 25, 0.7], [5, 75, 15, 1], [30, 76, 5, 4], [40, 75, 5, 2],
  ],
  5: [[4, 12, 30, 1], [4, 15, 16, 1]],
};
const thumbTables = {
  1: [],
  2: [[4, 43, 53, 8], [4, 53, 53, 7], [4, 62, 53, 5], [4, 70, 53, 11]],
  3: [[4, 13, 53, 7], [4, 21, 53, 6]],
  4: [[4, 20, 53, 14], [4, 36, 53, 14], [4, 52, 53, 5], [4, 60, 53, 10], [4, 73, 53, 11]],
  5: [],
};
const ThumbPage = ({ n }) => (
  <svg width="63" height="89" viewBox="0 0 63 89">
    <rect x=".75" y=".75" width="61.5" height="87.5" fill="#fff" stroke="#111" strokeWidth="1.200" />
    {[...commonBars, ...thumbBars[n]].map(([x, y, w, h, c], i) => (
      <rect key={i} x={x} y={y} width={w} height={h} fill={c || "#111"} />
    ))}
    {thumbTables[n].map(([x, y, w, h], i) => (
      <g key={i} fill="none" stroke="#888" strokeWidth="1">
        <rect x={x} y={y} width={w} height={h} />
        <path d={`M${x} ${y + 2}h${w}M${x + 22} ${y}v${h}M${x + 34} ${y}v${h}M${x + 44} ${y}v${h}`} />
      </g>
    ))}
    {n === 1 && (
      <g>
        <rect x="4" y="14.500" width="11" height="1" fill="#3ddc84" />
        <rect x="8" y="36" width="4" height="26" fill="#e0e0e0" />
        <rect x="32" y="36" width="4" height="26" fill="#e0e0e0" />
        <rect x="43" y="39" width="8" height="7" fill="#ddd" />
        <rect x="43" y="53" width="8" height="7" fill="#ddd" />
        <rect x="1.200" y="14" width="60.600" height="57" fill="none" stroke="#3ddc84" strokeWidth=".8" />
        <rect x="2" y="14" width="59" height="57" fill="none" stroke="#f0107a" strokeWidth="1.500" />
        <rect x="57" y="67" width="4" height="4" fill="#f0107a" />
      </g>
    )}
  </svg>
);

/* drawing on the page, coordinates measured off the reference */
const X = (p) => 780 + p / 2.8;
const Y = (p) => 450 + p / 3;

const Dot = ({ x, y }) => <circle cx={X(x)} cy={Y(y)} r="1.900" fill="#000" />;
const Seg = ({ x1, y1, x2, y2, c = "#999", w = 0.6, dash }) => (
  <line x1={X(x1)} y1={Y(y1)} x2={X(x2)} y2={Y(y2)} stroke={c} strokeWidth={w} strokeDasharray={dash} />
);
const Lbl = ({ x, y, rot, size = 8, children }) => (
  <text
    x={X(x)}
    y={Y(y)}
    fontSize={size}
    fill="#555"
    textAnchor="middle"
    dominantBaseline="central"
    transform={rot ? `rotate(-90 ${X(x)} ${Y(y)})` : undefined}
  >
    {children}
  </text>
);
const Poly = ({ pts, fill }) => (
  <polygon points={pts.map(([a, b]) => `${X(a)},${Y(b)}`).join(" ")} fill={fill} />
);

const ColumnModel = ({ cx, band, strip, arrow, a, b, top, arc, head }) => {
  const ticks = [];
  for (let y = 301; y < 963; y += 36.8) ticks.push(y);
  return (
    <g>
      <rect x={X(cx - 21)} y={Y(168)} width={42 / 2.8} height={794 / 3} fill="#e2e2e2" stroke="#999" strokeWidth=".5" />
      <Seg x1={cx} y1={168} x2={cx} y2={962} c="#aaa" w={0.6} dash="2 1" />
      <Seg x1={cx - 21} y1={817} x2={cx + 21} y2={817} c="#888" />
      <Seg x1={cx} y1={105} x2={cx} y2={130} c="#e39a9a" />
      <Seg x1={cx} y1={130} x2={cx} y2={168} c="#3aa7a7" w={0.9} />
      <path d={arc} fill="none" stroke="#aaa" strokeWidth=".6" />
      <Poly pts={head} fill="#a00000" />
      <Lbl x={cx - 27} y={90}>35.0</Lbl>
      <Lbl x={cx - 32} y={116}>125.0</Lbl>
      <Lbl x={cx - 9} y={171}>{top}</Lbl>
      <rect x={X(band)} y={Y(170)} width={60 / 2.8} height={131 / 3} fill="#fae5e5" stroke="#ee9a9a" strokeWidth=".6" />
      <Seg x1={band} y1={170} x2={band + 60} y2={170} c="#b01010" w={0.9} />
      <Seg x1={band} y1={301} x2={band + 60} y2={301} c="#b01010" w={0.9} />
      <Poly pts={[[band + 46, 165], [band + 60, 170], [band + 46, 175]]} fill="#a00000" />
      <Poly pts={[[band + 46, 296], [band + 60, 301], [band + 46, 306]]} fill="#a00000" />
      <rect x={X(band + 15)} y={Y(203)} width={30 / 2.8} height={65 / 3} fill="#fff" stroke="#ddd" strokeWidth=".4" />
      <Lbl x={band + 30} y={235} rot>{a}</Lbl>
      <rect x={X(strip)} y={Y(301)} width={32 / 2.8} height={662 / 3} fill="#fae5e5" stroke="#ee9a9a" strokeWidth=".6" />
      {ticks.map((y) => (
        <Seg key={y} x1={strip} y1={y} x2={strip + 32} y2={y} c="#eba0a0" w={0.5} />
      ))}
      {ticks.map((y) => (
        <Seg key={`a${y}`} x1={strip + 22} y1={y} x2={strip + 32} y2={y} c="#a01010" w={0.8} />
      ))}
      <rect x={X(strip)} y={Y(600)} width={32 / 2.8} height={66 / 3} fill="#fff" />
      <Lbl x={strip + 17} y={632} rot>{b}</Lbl>
      <Seg x1={arrow} y1={863} x2={arrow + 65} y2={863} c="#b01010" w={0.9} />
      <Poly pts={[[arrow + 58, 856], [arrow + 80, 863], [arrow + 58, 870]]} fill="#a00000" />
      <Lbl x={arrow + 25} y={882}>250.0</Lbl>
      <Lbl x={cx} y={1058}>x</Lbl>
      <Seg x1={cx} y1={1068} x2={cx} y2={1085} c="#bbb" />
    </g>
  );
};

const SectionDraw = ({ dy, gap, side, rebars }) => {
  const t = 436 + dy;
  const b = 551 + dy;
  const axisY = 493 + dy;
  return (
    <g>
      <rect x={X(1286)} y={Y(t)} width={107 / 2.8} height={(b - t) / 3} fill="#dfdfdf" stroke="#aaa" strokeWidth=".6" />
      {rebars.map(([x, y], i) => (
        <rect key={i} x={X(x) - 0.6} y={Y(y + dy) - 0.6} width="1.300" height="1.300" fill="#8d8548" />
      ))}
      <Seg x1={1274} y1={axisY} x2={1339} y2={axisY} c="#777" />
      <Seg x1={1339} y1={axisY} x2={1339} y2={565 + dy} c="#777" />
      <Lbl x={1256} y={497 + dy}>y</Lbl>
      <Lbl x={1339} y={585 + dy}>z</Lbl>
      {/* top dimension */}
      <Seg x1={1267} y1={346 + dy} x2={1412} y2={346 + dy} />
      <Seg x1={1286} y1={350 + dy} x2={1286} y2={405 + dy} />
      <Seg x1={1392} y1={350 + dy} x2={1392} y2={405 + dy} />
      <Dot x={1286} y={346 + dy} />
      <Dot x={1392} y={346 + dy} />
      <Lbl x={1339} y={337 + dy}>35.0</Lbl>
      {/* left cover */}
      <Seg x1={1202} y1={t - 21} x2={1202} y2={t + gap + 21} />
      <Seg x1={1195} y1={t} x2={1258} y2={t} />
      <Seg x1={1195} y1={t + gap} x2={1258} y2={t + gap} />
      <Dot x={1202} y={t} />
      <Dot x={1202} y={t + gap} />
      <Lbl x={1186} y={t + 11} rot>{side}</Lbl>
      {/* right dimension */}
      <Seg x1={1476} y1={t - 21} x2={1476} y2={b + 21} />
      <Seg x1={1420} y1={t} x2={1497} y2={t} />
      <Seg x1={1420} y1={b - 1} x2={1497} y2={b - 1} />
      <Dot x={1476} y={t} />
      <Dot x={1476} y={b - 1} />
      <Lbl x={1458} y={492 + dy} rot>35.0</Lbl>
      {/* bottom cover */}
      <Seg x1={1353} y1={640 + dy} x2={1412} y2={640 + dy} />
      <Seg x1={1392 - gap * 0.9} y1={580 + dy} x2={1392 - gap * 0.9} y2={660 + dy} />
      <Seg x1={1392} y1={580 + dy} x2={1392} y2={660 + dy} />
      <Dot x={1392 - gap * 0.9} y={640 + dy} />
      <Dot x={1392} y={640 + dy} />
      <Lbl x={1382} y={621 + dy}>{side}</Lbl>
    </g>
  );
};

const rebars1 = [
  [1301, 451], [1312, 451], [1301, 457], [1301, 464], [1366, 451], [1377, 451], [1377, 457], [1377, 464],
  [1301, 521], [1301, 528], [1301, 535], [1312, 535], [1377, 521], [1377, 528], [1366, 535], [1377, 535],
];
const rebars2 = [
  [1301, 453], [1310, 453], [1318, 453], [1326, 453], [1354, 453], [1362, 453], [1370, 453], [1378, 453],
  [1301, 461], [1301, 470], [1377, 461], [1377, 470], [1301, 513], [1301, 522], [1377, 513], [1377, 522],
  [1301, 533], [1310, 533], [1318, 533], [1326, 533], [1354, 533], [1362, 533], [1370, 533], [1378, 533],
];

const ColumnDrawing = () => (
  <Drawing width="560" height="362" viewBox="780 450 560 362">
    <ColumnModel
      cx={252}
      band={100}
      strip={177}
      arrow={80}
      a="2.80"
      b="2.40"
      top="11.00"
      arc={`M${X(222)} ${Y(230)}A23 22 0 1 1 ${X(300)} ${Y(215)}`}
      head={[[288, 238], [297, 196], [318, 208]]}
    />
    <ColumnModel
      cx={925}
      band={776}
      strip={852}
      arrow={753}
      a="2.60"
      b="2.30"
      top="12.00"
      arc={`M${X(960)} ${Y(232)}A24 22.500 0 1 0 ${X(872)} ${Y(215)}`}
      head={[[888, 242], [857, 212], [878, 197]]}
    />
    <Seg x1={1094} y1={150} x2={1094} y2={985} c="#aaa" w={0.8} />
    <Seg x1={1178} y1={150} x2={1178} y2={985} c="#ddd" w={2} />
    {[169, 817, 962].map((y) => (
      <g key={y}>
        <Seg x1={1040} y1={y} x2={1115} y2={y} />
        <Dot x={1094} y={y} />
      </g>
    ))}
    {[169, 962].map((y) => (
      <g key={y}>
        <Seg x1={1123} y1={y} x2={1198} y2={y} />
        <Dot x={1178} y={y} />
      </g>
    ))}
    <Lbl x={1077} y={492} rot>4.90</Lbl>
    <Lbl x={1077} y={888} rot>1.10</Lbl>
    <Lbl x={1161} y={565} rot>6.00</Lbl>
    <SectionDraw dy={0} gap={21} side="6.1" rebars={rebars1} />
    <SectionDraw dy={396} gap={25} side="7.3" rebars={rebars2} />
  </Drawing>
);

/* ---------- data ---------- */
const situations = [
  { t: ["decisive"], w: 50, active: true },
  { t: ["permanent/transient"], w: 112 },
  { t: ["accidental"], w: 58 },
  { t: ["Fire"], w: 34 },
  { t: ["charact."], w: 46 },
  { t: ["quasi-", "permanent"], w: 64 },
];
const results = [
  { t: ["Load"], w: 30, ml: 10, I: LoadIcon },
  { t: ["Internal", "forces"], w: 47, ml: 2, I: ForcesIcon, active: true },
  { t: ["Deformations"], w: 74, ml: 3, I: DeformIcon },
  { t: ["Reinforcement"], w: 82, ml: 5, I: ReinfIcon },
  { t: ["Stiffness"], w: 46, ml: 6, I: StiffIcon },
];
const methods = [
  { t: ["1st Order", "without Ea"], w: 58, ml: 7, I: Order1 },
  { t: ["1st Order with", "Ea (creeping)"], w: 76, ml: 5, I: OrderCreep, off: true },
  { t: ["1st Order", "with Ea"], w: 50, ml: 6, I: OrderEa },
  { t: ["2nd", "Order"], w: 38, ml: 2, I: Order2, active: true },
];
const pages = [1, 2, 3, 4, 5];

const ToolSelect = ({ w = 14, off }) => (
  <Tool $w={w}><SmallArrow $c={off ? "#aaa" : "#222"} style={{ margin: 0 }} /></Tool>
);

function RibbonButton({ t, w, ml, active, off, children }) {
  return (
    <RibbonBtn $w={w} $ml={ml} $active={active} $off={off}>
      <BtnIcon>{children}</BtnIcon>
      {t.map((line) => (
        <BtnText key={line}>{line}</BtnText>
      ))}
    </RibbonBtn>
  );
}

function PropLine({ label, children, ...rest }) {
  return (
    <PropRow>
      <PropLabel>{label}</PropLabel>
      <PropValue {...rest}>{children}</PropValue>
    </PropRow>
  );
}

const Check = () => (
  <svg width="11" height="11" viewBox="0 0 11 11">
    <path d="M1.500 5.500l3 3 5-7" fill="none" stroke="#444" strokeWidth="1.200" />
  </svg>
);
const Flag = () => (
  <svg width="17" height="15" viewBox="0 0 17 15" style={{ marginRight: 3, flex: "none" }}>
    <rect width="17" height="5" fill="#111" />
    <rect y="5" width="17" height="5" fill="#d00" />
    <rect y="10" width="17" height="5" fill="#fc0" />
  </svg>
);

export default function App() {
  return (
    <Root>
      <GlobalStyle />
      <TitleBar>
        <QuickAccess>
          <Logo>B5<span>+</span></Logo>
          <QuickBtn $w={20}>
            <svg width="12" height="16" viewBox="0 0 12 16">
              <path d="M1 1h7l3 3v11H1z" fill="none" stroke="#fff" strokeWidth="1.200" />
            </svg>
          </QuickBtn>
          <QuickBtn $w={23}>
            <svg width="16" height="16" viewBox="0 0 16 16">
              <path d="M1 1h11l3 3v11H1z" fill="none" stroke="#fff" strokeWidth="1.200" />
              <path d="M4 1v5h8V1M4 10h8M4 12.500h8" stroke="#fff" fill="none" />
            </svg>
          </QuickBtn>
          <QuickBtn $w={22}>
            <svg width="16" height="16" viewBox="0 0 16 16">
              <rect x="5" y="1" width="10" height="14" fill="#2f7fd3" />
              <path d="M5 5h10M5 8h10M5 11h10" stroke="#1a4f99" />
              <rect x="0" y="3" width="9" height="10" fill="#185abd" />
              <text x="1.500" y="11" fontSize="8" fill="#fff" fontFamily="Liberation Sans" fontWeight="700">W</text>
            </svg>
          </QuickBtn>
          <QuickBtn $w={22}>
            <svg width="7" height="9" viewBox="0 0 7 9">
              <path d="M1 1h5" stroke="#fff" />
              <path d="M0 4h7L3.500 8z" fill="#fff" />
            </svg>
          </QuickBtn>
        </QuickAccess>
        <Title>B5+ (Project: Examples Reinforced Concrete) - B5+ Reinforced Concrete Column 01/22C (R-2022-1/P07)</Title>
        <WindowButtons>
          <WindowBtn>
            <svg width="11" height="2" viewBox="0 0 11 2"><path d="M0 1h11" stroke="#fff" /></svg>
          </WindowBtn>
          <WindowBtn>
            <svg width="11" height="11" viewBox="0 0 11 11"><rect x=".5" y=".5" width="10" height="10" fill="none" stroke="#fff" /></svg>
          </WindowBtn>
          <WindowBtn>
            <svg width="12" height="12" viewBox="0 0 12 12"><path d="M1 1l10 10M11 1L1 11" stroke="#fff" /></svg>
          </WindowBtn>
        </WindowButtons>
      </TitleBar>

      <MenuRow>
        <MenuTab $w={62}>File</MenuTab>
        <MenuTab $w={68}>Start</MenuTab>
        <MenuTab $w={86} $active>Results</MenuTab>
        <HelpArea>
          <Chevrons />
          <svg width="17" height="17" viewBox="0 0 17 17">
            <circle cx="8.500" cy="8.500" r="7.500" fill="#fff" stroke="#333" />
            <text x="8.500" y="12.500" fontSize="11" textAnchor="middle" fill="#333" fontFamily="Liberation Sans">?</text>
          </svg>
          <span>Help</span>
          <SmallArrow style={{ margin: "0 0 0 1px" }} />
        </HelpArea>
      </MenuRow>

      <Ribbon>
        <Group $w={33}>
          <GroupBody />
          <GroupLabel $left>View</GroupLabel>
        </Group>
        <Group $w={390}>
          <GroupBody $pl={4}>
            {situations.map((s) => (
              <RibbonButton key={s.t[0]} {...s}>
                <Situation />
              </RibbonButton>
            ))}
          </GroupBody>
          <GroupLabel>design situation</GroupLabel>
        </Group>
        <Group $w={365}>
          <GroupBody $pl={4} $gap={0}>
            <RibbonButton t={["Extreme-", "values"]} w={56} active>
              <Extreme />
            </RibbonButton>
            <RibbonButton t={["Load case-", "combinations"]} w={77}>
              <LoadCase />
            </RibbonButton>
            <ComboStack>
              <Combo>
                <span>(*)LCc 1: 1.00*Permanent + 1.00*Per</span>
                <SmallArrow />
              </Combo>
              <Combo>
                <span>All load cases</span>
                <SmallArrow />
              </Combo>
            </ComboStack>
          </GroupBody>
          <GroupLabel>Presentation</GroupLabel>
        </Group>
        <Group $w={109}>
          <GroupBody $gap={0}>
            <RibbonButton t={["Nom_", "curvatures"]} w={66} off>
              <NomCurv />
            </RibbonButton>
            <RibbonButton t={["Non-", "linear"]} w={38} active>
              <NonLinear />
            </RibbonButton>
          </GroupBody>
          <GroupLabel>Design</GroupLabel>
        </Group>
        <Group $w={247}>
          <GroupBody $gap={0}>
            {methods.map(({ I, ...m }) => (
              <RibbonButton key={m.t[0] + m.t[1]} {...m}>
                <I />
              </RibbonButton>
            ))}
          </GroupBody>
          <GroupLabel>Calculation method</GroupLabel>
        </Group>
        <Group $w={314}>
          <GroupBody $gap={0}>
            {results.map(({ I, ...m }) => (
              <RibbonButton key={m.t[0]} {...m}>
                <I />
              </RibbonButton>
            ))}
          </GroupBody>
          <GroupLabel>Results</GroupLabel>
        </Group>
        <RibbonCollapse>
          <svg width="12" height="7" viewBox="0 0 12 7"><path d="M1 6l5-5 5 5" fill="none" stroke="#555" /></svg>
        </RibbonCollapse>
      </Ribbon>

      <Workspace>
        <LeftPanel>
          <PanelHeader>
            <span>Properties</span>
            <svg width="9" height="12" viewBox="0 0 9 12">
              <path d="M2 1h5v6H2zM0 7.500h9M4.500 8v4" stroke="#111" fill="#111" />
              <path d="M3 2h1.500v4H3z" fill="#fff" />
            </svg>
          </PanelHeader>
          <Tree>
            <TreeLine />
            <TreeTools>
              <svg width="13" height="13" viewBox="0 0 13 13">
                <circle cx="5" cy="5" r="3.500" fill="#fff" stroke="#1d6fae" strokeWidth="1.800" />
                <path d="M8 8l4 4" stroke="#174a7a" strokeWidth="2.400" />
              </svg>
              <Chevrons />
            </TreeTools>
            <TreeRow><TreeDash $w={10} $ml={5} $mr={1} /><TreeText $sel>Basic parameter</TreeText></TreeRow>
            <TreeRow><Expander /><TreeDash $w={4} /><TreeText>System</TreeText></TreeRow>
            <TreeRow><Expander /><TreeDash $w={4} /><TreeText>Loading</TreeText></TreeRow>
            <TreeRow><TreeDash $w={10} $ml={5} $mr={1} /><TreeText>Design</TreeText></TreeRow>
            <TreeRow><TreeDash $w={10} $ml={5} $mr={1} /><TreeText>Reinforcement</TreeText></TreeRow>
            <TreeRow><Expander /><TreeDash $w={4} /><TreeText>Output</TreeText></TreeRow>
          </Tree>

          <SectionHead>
            <span>Design Standards and Safety Concept</span>
            <Chevrons />
          </SectionHead>
          <PropLine label="Design Standard" $flag>
            <Flag />
            <span>DIN EN 1992:2015</span>
            <DropBtn><i /></DropBtn>
          </PropLine>
          <PropLine label=" ψ2 for crane loads" $end>0.90</PropLine>
          <PropLine label="Snow as accidental loads" $end><CheckBox /></PropLine>
          <PropLine label="ψ2 = 0,5 for snow (AE)" $end><CheckBox /></PropLine>
          <PropLine label="Location in windzone 3 or 4" $end><CheckBox /></PropLine>
          <PropLine label="equal γG for all permanent loads" $end><CheckBox><Check /></CheckBox></PropLine>

          <SectionHead>
            <span>Reinforcement requirements / Durability</span>
            <Chevrons />
          </SectionHead>
          <PropLine label="Longitudinal bar diameter"><span>16</span><DropBtn><i /></DropBtn></PropLine>
          <PropLine label="Link diameter"><span>8</span><DropBtn><i /></DropBtn></PropLine>
          <PropLine label="Durability">
            <span>XC1/X0 &nbsp;&gt;&gt;&nbsp; C16/20</span>
            <EditBtn>
              <svg width="16" height="13" viewBox="0 0 16 13">
                <rect x=".5" y="2.500" width="12" height="10" fill="#dfe9f7" stroke="#4c79b8" />
                <rect x=".5" y="2.500" width="12" height="2.500" fill="#4c79b8" />
                <path d="M7 9l7-8" stroke="#d89b2b" strokeWidth="2" />
              </svg>
            </EditBtn>
          </PropLine>

          <SectionHead>
            <span>Berechnung</span>
            <Chevrons />
          </SectionHead>
          <PropLine label="Ausweichrichtungen"><span>zweiachsig</span><DropBtn><i /></DropBtn></PropLine>
          <PanelFill />
        </LeftPanel>

        <RightPane>
          <DocTabs>
            <DocTab $w={60} $ml={5}>Graphics</DocTab>
            <DocTab $w={66} $ml={7} $active>Document</DocTab>
          </DocTabs>
          <Toolbar>
            <ToolStrip>
              <ToolSep $w={13} $grip />
              <Tool $w={22}><SaveIco /></Tool>
              <Tool $w={24}><PrintIco /></Tool>
              <Tool $w={23} $active><PanelIco /></Tool>
              <Tool $w={22}><ExportIco /></Tool>
              <Tool $w={23}><FilmIco /></Tool>
              <ToolSep $w={12} $grip />
              <Tool $w={20}><ZoomIco /></Tool>
              <ToolSelect />
              <Tool $w={20}><RoundIco sign="-" /></Tool>
              <ToolField $w={56} $bg>80%</ToolField>
              <ToolSelect w={13} />
              <Tool $w={15}><RoundIco sign="+" /></Tool>
              <ToolSep $w={12} />
              <Tool $w={21}><FitPage /></Tool>
              <Tool $w={22}><FitWidth /></Tool>
              <ToolSep $w={14} $grip />
              <Tool $w={22} $active><ViewPanel /></Tool>
              <ToolSep $w={6} />
              <Tool $w={23}><NavIco kind="first" /></Tool>
              <Tool $w={22}><NavIco kind="prev" /></Tool>
              <ToolText $w={35} $pl={5}>Page</ToolText>
              <ToolField $w={34} $bg>1</ToolField>
              <ToolText $w={30} $pl={5}>of 7</ToolText>
              <Tool $w={21}><NavIco kind="next" on /></Tool>
              <Tool $w={22}><NavIco kind="last" on /></Tool>
              <ToolSep $w={6} />
              <Tool $w={22}><NavIco kind="back" on /></Tool>
              <ToolSelect w={10} />
              <Tool $w={22}><NavIco kind="fwd" /></Tool>
              <ToolSelect w={10} off />
              <ToolSep $w={13} $grip />
              <Tool $w={22}><BookIco kind="single" /></Tool>
              <Tool $w={24}><BookIco kind="cont" /></Tool>
              <Tool $w={22}><BookIco kind="two" /></Tool>
              <Tool $w={24}><BookIco kind="four" /></Tool>
              <ToolSep $w={12} $grip />
              <Tool $w={23} $active><HandIco /></Tool>
              <Tool $w={22}><TextSelIco /></Tool>
              <Tool $w={24}><BinocIco /></Tool>
              <ToolSep $w={7} />
              <ToolText $w={63} $pl={2}>Start page:</ToolText>
              <ToolField $w={30} $boxed $bg>1</ToolField>
              <ToolSep $w={8} />
              <ToolText $w={74} $pl={4}>Page layout</ToolText>
            </ToolStrip>
          </Toolbar>
          <ViewerRow>
            <ThumbColumn>
              <ThumbTabs>
                <ThumbTab $w={45} $active>Pages</ThumbTab>
                <ThumbTab $w={60}>Bookmarks</ThumbTab>
              </ThumbTabs>
              <ThumbFrame>
                <ThumbList>
                  {pages.map((n) => (
                    <ThumbItem key={n}>
                      <ThumbBox $sel={n === 1}>
                        <ThumbPage n={n} />
                      </ThumbBox>
                      {n < 5 && <ThumbName $sel={n === 1}>Page {n}</ThumbName>}
                    </ThumbItem>
                  ))}
                </ThumbList>
                <VScroll>
                  <ScrollArrow $h={20}><TinyArrow dir="up" /></ScrollArrow>
                  <ScrollThumb $h={323} />
                  <ScrollArrow $h={20}><TinyArrow dir="down" /></ScrollArrow>
                </VScroll>
                <HScroll>
                  <TinyArrow dir="left" />
                  <HThumb />
                  <TinyArrow dir="right" />
                </HScroll>
              </ThumbFrame>
            </ThumbColumn>
            <DocArea>
              <TopRuler><HRuler /></TopRuler>
              <DocMiddle>
                <SideRuler><VRuler /></SideRuler>
                <Canvas>
                  <Page>
                    <DocH1><span>Basic Parameters</span></DocH1>
                    <DocH2 $mt={6}>Basis of calculation</DocH2>
                    <DocBullets>
                      <li>Single column with projecting end, bi-axial strained</li>
                      <li>Materials C 30/37, B500A</li>
                    </DocBullets>
                    <DocH2 $mt={10}>Code and safety concept</DocH2>
                    <DocTable>
                      <DocRow><div>Design codes</div><div>:</div><DocVal $code>DIN EN 1992-1-1/NA/A1:2015-12</DocVal></DocRow>
                      <DocRow><div /><div>:</div><DocVal $code>DIN EN 1992-1-2/NA/A1:2015-09</DocVal></DocRow>
                      <DocRow><div>Safety concept / load combinatorics</div><div>:</div><DocVal $code>DIN EN 1990/NA:2010-12</DocVal></DocRow>
                      <DocRow><div>Ψ₂ for crane loads</div><div>:</div><DocVal>0.90</DocVal></DocRow>
                      <DocRow><div>Ψ₂ = 0.5 for snow (AE)</div><div>:</div><DocVal>not considered</DocVal></DocRow>
                      <DocRow><div>Permanent loads</div><div>:</div><DocVal>all equal γ<sub>F</sub> (γ<sub>G,sup</sub> or γ<sub>G,inf</sub>)</DocVal></DocRow>
                    </DocTable>
                    <DocH1 $mt={8}><span>System</span></DocH1>
                    <DocH2 $mt={6}>System graphic 2D</DocH2>
                    <DocH2 $mt={8} $plain>Scale 1 : 68.6</DocH2>
                    <ColumnDrawing />
                  </Page>
                </Canvas>
                <MainVScroll>
                  <ScrollArrow $h={18}><TinyArrow dir="up" /></ScrollArrow>
                  <ScrollThumb $h={50} $mt={12} />
                  <ScrollArrow $h={18}><TinyArrow dir="down" /></ScrollArrow>
                </MainVScroll>
              </DocMiddle>
              <MainHScroll>
                <TinyArrow dir="left" c="#bbb" />
                <TinyArrow dir="right" c="#bbb" />
              </MainHScroll>
            </DocArea>
          </ViewerRow>
          <BelowViewer>
            <svg width="12" height="12" viewBox="0 0 12 12">
              <path d="M10 2h1v1h-1zM6 6h1v1H6zM10 6h1v1h-1zM2 10h1v1H2zM6 10h1v1H6zM10 10h1v1h-1z" fill="#888" />
            </svg>
          </BelowViewer>
          <SheetBar>
            <SheetTab $active><GridIco active />Column sections</SheetTab>
            <SheetTab $ml={13}><GridIco />Support</SheetTab>
            <SheetTab $ml={19}><GridIco />Attached columns</SheetTab>
            <SheetTab $ml={20}><GridIco />Loads</SheetTab>
            <SheetTab $ml={21}><GridIco />Use-defined actions</SheetTab>
            <SheetClose>
              <svg width="9" height="9" viewBox="0 0 9 9"><path d="M1 1l7 7M8 1L1 8" stroke="#111" strokeWidth="1.600" /></svg>
            </SheetClose>
          </SheetBar>
        </RightPane>
      </Workspace>
      <StatusBar />
    </Root>
  );
}
